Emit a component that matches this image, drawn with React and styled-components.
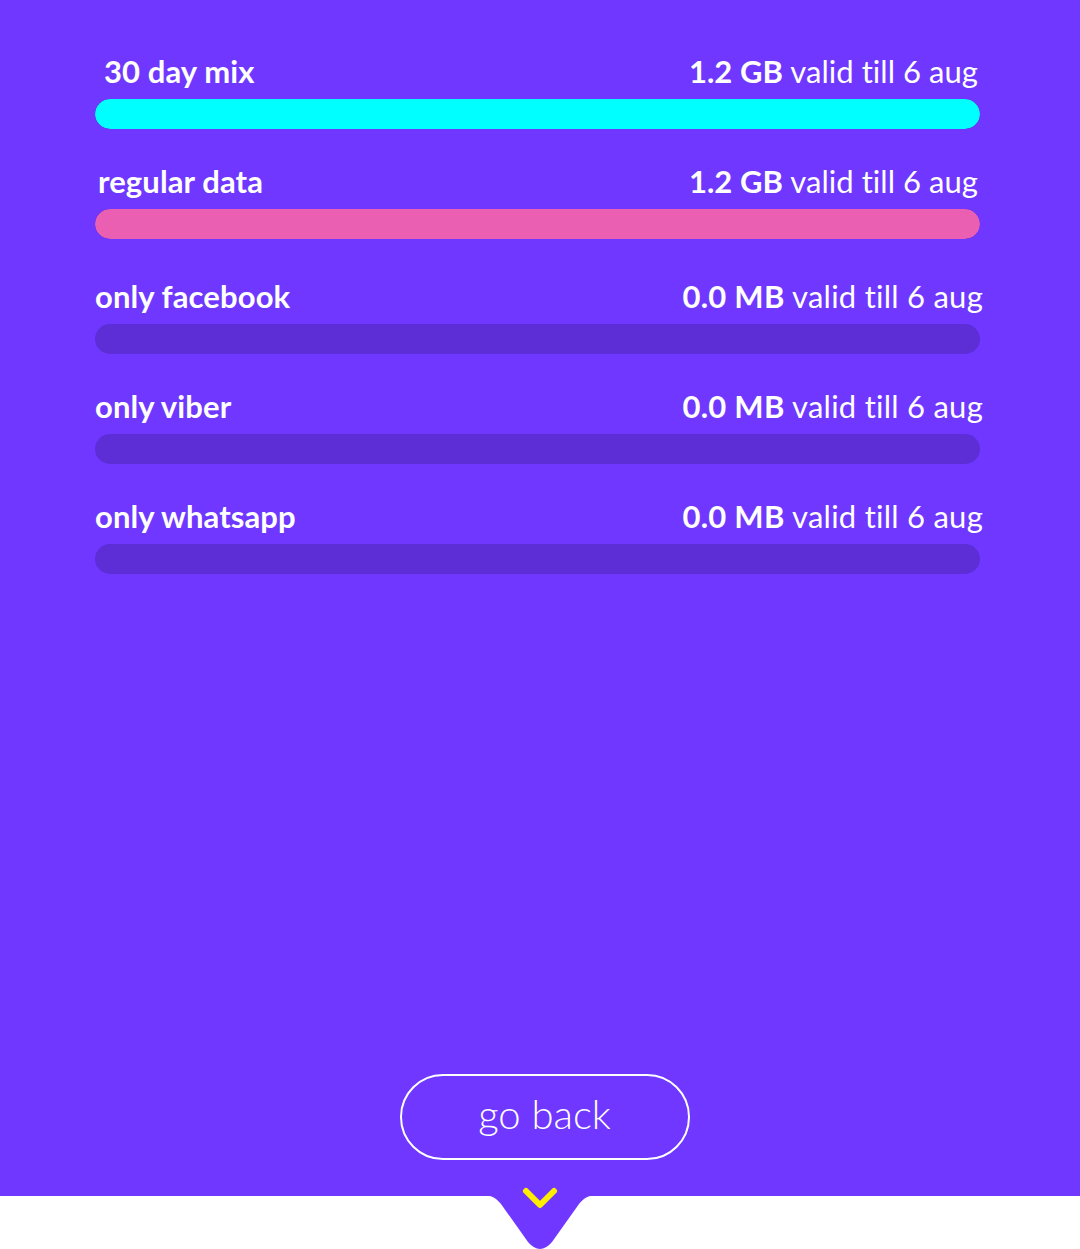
import React from "react";
import styled, { createGlobalStyle } from "styled-components";

const Global = createGlobalStyle`
  html, body { margin: 0; padding: 0; background: #ffffff; }
  body { font-family: "Lato", "Open Sans", sans-serif; }
`;

const Page = styled.div`
  width: 1080px;
  height: 1249px;
  display: flex;
  flex-direction: column;
  background: #ffffff;
  overflow: hidden;
`;

const Main = styled.main`
  flex: 1;
  background: #6f37ff;
  display: flex;
  flex-direction: column;
  padding: 49px 100px 36px 95px;
`;

const List = styled.div`
  display: flex;
  flex-direction: column;
  gap: 35px;
`;

const Group = styled.section`
  display: flex;
  flex-direction: column;
  gap: 30px;
`;

const Row = styled.div`
  display: flex;
  flex-direction: column;
  gap: 5px;
`;

const Head = styled.div`
  display: flex;
  justify-content: space-between;
  align-items: baseline;
  height: 45px;
  padding-left: ${(p) => p.$indent || 0}px;
  margin-right: ${(p) => p.$overhang || 0}px;
  color: #ffffff;
  font-variant-ligatures: none;
`;

const Label = styled.span`
  font-size: 31px;
  font-weight: 700;
  line-height: 45px;
  letter-spacing: 0.1px;
`;

const Amount = styled.span`
  font-size: 31px;
  line-height: 45px;
  font-weight: 400;
  letter-spacing: ${(p) => p.$spacing}px;
  b { font-weight: 700; }
`;

const Track = styled.div`
  height: 30px;
  width: 885px;
  border-radius: 15px;
  background: #5d2ed6;
  overflow: hidden;
`;

const Fill = styled.div`
  height: 100%;
  border-radius: 15px;
  background: ${(p) => p.$color};
`;

const Spacer = styled.div`
  flex: 1;
`;

const BackButton = styled.button`
  align-self: center;
  margin-left: 14px;
  width: 290px;
  height: 86px;
  border: 2px solid #ffffff;
  border-radius: 43px;
  background: transparent;
  color: #ffffff;
  font-family: "Lato", "Open Sans", sans-serif;
  font-size: 40px;
  font-weight: 300;
  cursor: pointer;
  padding: 0 0 6px;
`;

const Footer = styled.footer`
  position: relative;
  height: 53px;
  background: #ffffff;
`;

const Notch = styled.svg`
  position: absolute;
  left: 480px;
  top: -1px;
`;

const Chevron = styled.svg`
  position: absolute;
  left: 521px;
  top: -10px;
`;

const paid = [
  { label: "30 day mix", amount: "1.2 GB", color: "#00ffff", pct: 100, indent: 9 },
  { label: "regular data", amount: "1.2 GB", color: "#ea5fb1", pct: 100, indent: 3 },
];

const apps = [
  { label: "only facebook", amount: "0.0 MB" },
  { label: "only viber", amount: "0.0 MB" },
  { label: "only whatsapp", amount: "0.0 MB" },
];

function DataRow({ item, overhang, indent, spacing }) {
  return (
    <Row>
      <Head $indent={indent} $overhang={overhang}>
        <Label>{item.label}</Label>
        <Amount $spacing={spacing}>
          <b>{item.amount}</b> valid till 6 aug
        </Amount>
      </Head>
      <Track>
        {item.pct ? <Fill $color={item.color} style={{ width: `${item.pct}%` }} /> : null}
      </Track>
    </Row>
  );
}

export default function App() {
  return (
    <>
      <Global />
      <Page>
        <Main>
          <List>
            <Group>
              {paid.map((it) => (
                <DataRow key={it.label} item={it} indent={it.indent} overhang={2} spacing={0.05} />
              ))}
            </Group>
            <Group>
              {apps.map((it) => (
                <DataRow key={it.label} item={it} indent={0} overhang={-3} spacing={0.25} />
              ))}
            </Group>
          </List>
          <Spacer />
          <BackButton>go back</BackButton>
        </Main>
        <Footer>
          <Notch width="120" height="54" viewBox="0 0 120 54">
            <path
              d="M0 0 H6 C13 1 17 4 21 9 L48 47 Q60 61 72 47 L99 9 C103 4 107 1 114 0 H120 V0 Z"
              fill="#6f37ff"
            />
          </Notch>
          <Chevron width="40" height="26" viewBox="0 0 40 26">
            <polyline
              points="5,5 19,19 33,5"
              fill="none"
              stroke="#ffee00"
              strokeWidth="6"
              strokeLinecap="round"
              strokeLinejoin="round"
            />
          </Chevron>
        </Footer>
      </Page>
    </>
  );
}
